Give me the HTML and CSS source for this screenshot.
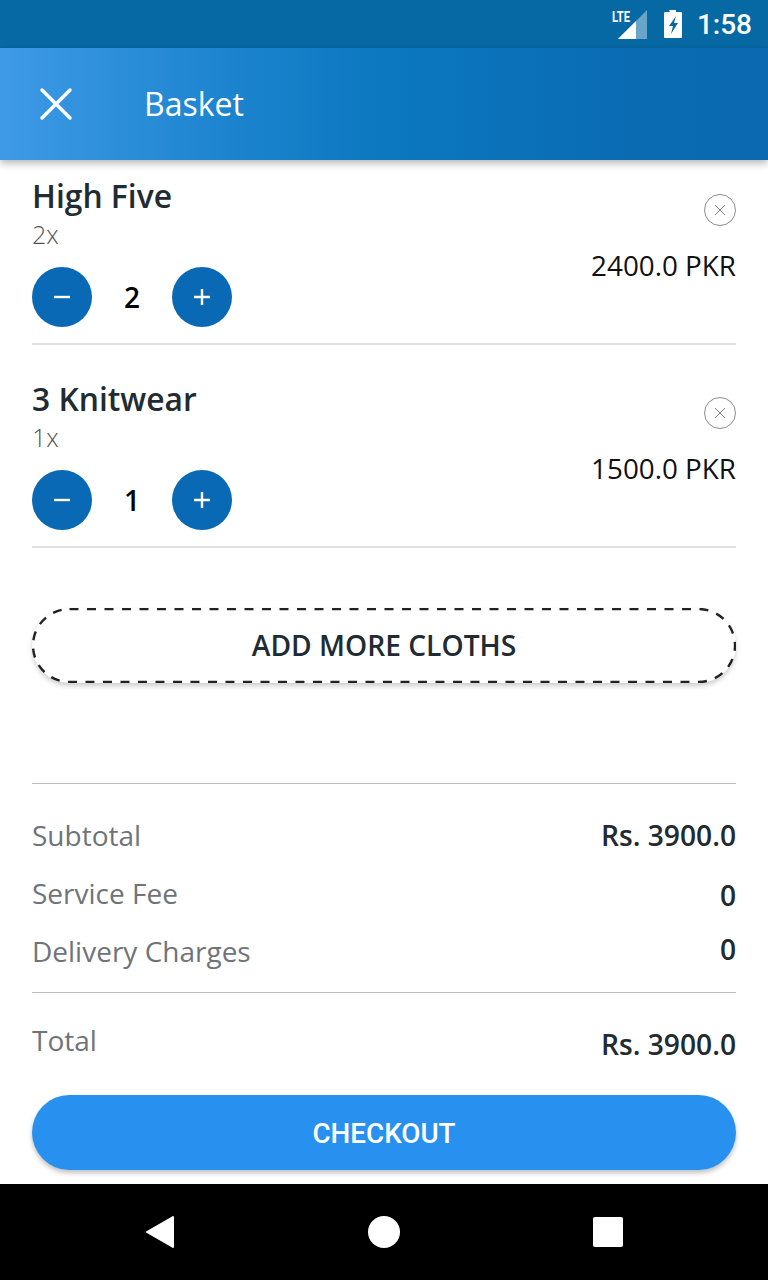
FILE: index.html
```html
<!DOCTYPE html>
<html lang="en">
<head>
<meta charset="utf-8">
<title>Basket</title>
<link rel="stylesheet" href="styles.css">
</head>
<body>
<div class="screen">
  <div class="status">
    <svg class="signal" viewBox="0 0 36 30" width="36" height="30">
      <text x="0" y="13" class="lte">LTE</text>
      <path d="M6 30 L35 1 V30 Z" fill="#fff" fill-opacity=".4"/>
      <path d="M6 30 L24 12 V30 Z" fill="#fff"/>
    </svg>
    <svg class="battery" viewBox="0 0 20 30" width="20" height="30">
      <path d="M6 1h7v2h5a1 1 0 0 1 1 1v24a1 1 0 0 1-1 1H2a1 1 0 0 1-1-1V4a1 1 0 0 1 1-1h5z" fill="#fff"/>
      <path d="M13 7 L6 17 H10 L8 25 L15 14 H11 Z" fill="#0669a4"/>
    </svg>
    <span class="time">1:58</span>
  </div>
  <header class="appbar">
    <svg class="close" viewBox="0 0 32 32" width="32" height="32">
      <path d="M2 2 L30 30 M30 2 L2 30" stroke="#fff" stroke-width="3.4" stroke-linecap="round"/>
    </svg>
    <h1 class="appbar-title">Basket</h1>
  </header>
  <main class="content">
    <section class="item item-first">
      <div class="item-left">
        <h2 class="item-name">High Five</h2>
        <div class="item-mult">2x</div>
        <div class="stepper">
          <button class="step"><svg viewBox="0 0 20 20" width="20" height="20"><path d="M2 10H18" stroke="#fff" stroke-width="2.4"/></svg></button>
          <span class="qty">2</span>
          <button class="step"><svg viewBox="0 0 20 20" width="20" height="20"><path d="M2 10H18M10 2V18" stroke="#fff" stroke-width="2.4"/></svg></button>
        </div>
      </div>
      <div class="item-right">
        <svg class="remove" viewBox="0 0 32 32" width="32" height="32"><circle cx="16" cy="16" r="15.5" fill="none" stroke="#8c8c8c" stroke-width="1"/><path d="M11 11L21 21M21 11L11 21" stroke="#808080" stroke-width="1"/></svg>
        <div class="price">2400.0 PKR</div>
      </div>
    </section>
    <section class="item">
      <div class="item-left">
        <h2 class="item-name">3 Knitwear</h2>
        <div class="item-mult">1x</div>
        <div class="stepper">
          <button class="step"><svg viewBox="0 0 20 20" width="20" height="20"><path d="M2 10H18" stroke="#fff" stroke-width="2.4"/></svg></button>
          <span class="qty">1</span>
          <button class="step"><svg viewBox="0 0 20 20" width="20" height="20"><path d="M2 10H18M10 2V18" stroke="#fff" stroke-width="2.4"/></svg></button>
        </div>
      </div>
      <div class="item-right">
        <svg class="remove" viewBox="0 0 32 32" width="32" height="32"><circle cx="16" cy="16" r="15.5" fill="none" stroke="#8c8c8c" stroke-width="1"/><path d="M11 11L21 21M21 11L11 21" stroke="#808080" stroke-width="1"/></svg>
        <div class="price">1500.0 PKR</div>
      </div>
    </section>
    <button class="add-more">
      <svg class="dash" viewBox="0 0 704 75" width="704" height="75"><rect x="1" y="1" width="702" height="73" rx="36.5" fill="none" stroke="#222" stroke-width="2.4" stroke-dasharray="9 8.5"/></svg>
      ADD MORE CLOTHS
    </button>
    <section class="summary">
      <div class="row row-sub"><span class="label">Subtotal</span><span class="value">Rs. 3900.0</span></div>
      <div class="row row-fee"><span class="label">Service Fee</span><span class="value">0</span></div>
      <div class="row row-del"><span class="label">Delivery Charges</span><span class="value">0</span></div>
    </section>
    <section class="total">
      <div class="row row-total"><span class="label">Total</span><span class="value">Rs. 3900.0</span></div>
    </section>
    <button class="checkout">CHECKOUT</button>
  </main>
  <nav class="navbar">
    <svg viewBox="0 0 30 34" width="30" height="34"><path d="M29 2 V32 L3 17 Z" fill="#fff" stroke="#fff" stroke-width="2" stroke-linejoin="round"/></svg>
    <svg viewBox="0 0 32 32" width="32" height="32"><circle cx="16" cy="16" r="16" fill="#fff"/></svg>
    <svg viewBox="0 0 30 30" width="30" height="30"><rect width="30" height="30" rx="2" fill="#fff"/></svg>
  </nav>
</div>
</body>
</html>
```
FILE: styles.css
```css
* { box-sizing: border-box; }
html, body { margin: 0; padding: 0; }
body { background: #fff; font-family: "Open Sans", sans-serif; }
.screen { width: 768px; height: 1280px; display: flex; flex-direction: column; overflow: hidden; }

.status { height: 48px; flex: none; background: #0669a4; display: flex; align-items: center; justify-content: flex-end; padding-right: 16px; }
.signal { margin-right: 15px; }
.lte { font: 700 14px "Roboto", sans-serif; fill: #fff; transform: scaleX(.8); }
.battery { margin-right: 14px; }
.time { font: 500 28px "Roboto", sans-serif; color: #fff; }

.appbar { height: 112px; flex: none; display: flex; align-items: center; padding-left: 40px; background: linear-gradient(90deg, #3e9ae6 0%, #1e85d0 28%, #0b78c0 50%, #0a6ab2 85%, #0a69b0 100%); box-shadow: 0 3px 8px rgba(0,0,0,.3); position: relative; z-index: 1; }
.appbar-title { margin: 0 0 0 72px; font-size: 32px; font-weight: 400; color: #fff; line-height: 40px; }

.content { flex: 1; padding: 0 32px; display: flex; flex-direction: column; }
.item { height: 203px; border-bottom: 2px solid #e0e0e0; display: flex; justify-content: space-between; padding-top: 34px; flex: none; }
.item-first { height: 185px; padding-top: 16px; }
.item-name { margin: 0 0 2px; font-size: 31.8px; font-weight: 600; color: #212b32; line-height: 40px; }
.item-mult { font-size: 25px; font-weight: 300; color: #555; line-height: 32px; }
.stepper { display: flex; align-items: center; margin-top: 17px; }
.step { width: 60px; height: 60px; border: 0; padding: 0; border-radius: 50%; background: #0a69b4; display: flex; align-items: center; justify-content: center; }
.qty { width: 80px; text-align: center; font-size: 28px; font-weight: 600; color: #000; line-height: 60px; }
.item-right { display: flex; flex-direction: column; align-items: flex-end; padding-top: 18px; }
.price { font-size: 27.8px; font-weight: 400; color: #111; line-height: 38px; margin-top: 20px; }

.add-more { position: relative; flex: none; height: 75px; margin-top: 60px; border: 0; padding: 0 0 2px; border-radius: 38px; background: #fff; font: 600 28.2px "Open Sans", sans-serif; color: #212b32; box-shadow: 0 3px 5px rgba(0,0,0,.2); }
.dash { position: absolute; left: 0; top: 0; }

.summary { margin-top: 100px; border-top: 1px solid #bdbdbd; border-bottom: 1px solid #bdbdbd; height: 210px; padding-top: 24px; flex: none; }
.row { display: flex; justify-content: space-between; }
.row-sub, .row-fee, .row-del { height: 58px; }
.label { font-size: 28px; color: #6f7478; line-height: 54px; }
.value { font-size: 28.2px; font-weight: 600; color: #212b32; line-height: 54px; }
.row-fee .value { margin-top: 2px; }
.row-del .value { margin-top: -2px; }
.total { padding-top: 20px; flex: none; }
.row-total .value { margin-top: 4px; }
.checkout { flex: none; height: 75px; margin-top: 24px; border: 0; padding: 2px 0 0; border-radius: 38px; background: #2891ef; color: #fff; font: 500 27.8px "Roboto", sans-serif; box-shadow: 0 3px 5px rgba(0,0,0,.25); }

.navbar { height: 96px; flex: none; background: #000; display: flex; align-items: center; justify-content: space-between; padding: 0 145px 0 144px; }
```
